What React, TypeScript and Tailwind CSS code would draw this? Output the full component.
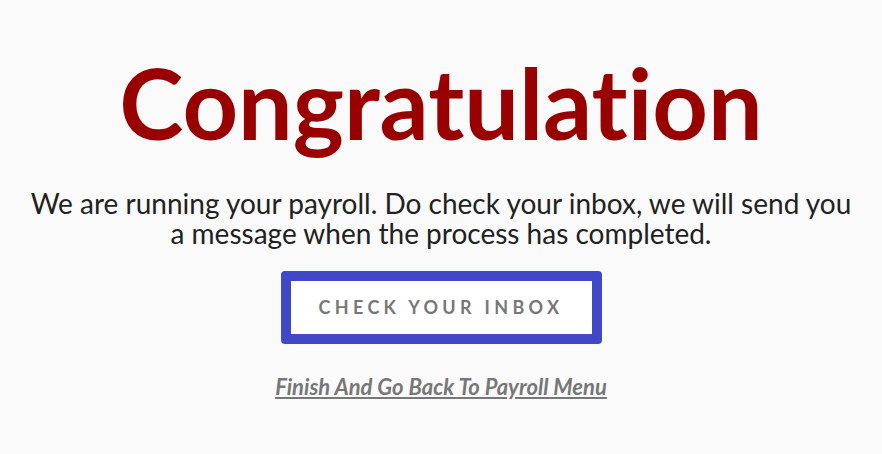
export default function App() {
  return (
    <div className="w-[882px] h-[454px] bg-[#fafafa] flex flex-col items-center font-['Lato',sans-serif]">
      <h1 className="mt-[48px] text-[97px] leading-[110px] font-bold text-[#990000] [font-variant-ligatures:none]">Congratulation</h1>
      <p className="mt-[30px] w-[840px] text-center text-[28px] leading-[30px] text-[#222222]">
        We are running your payroll. Do check your inbox, we will send you a message when the process has completed.
      </p>
      <button className="mt-[23px] w-[321px] h-[73px] border-[10px] border-[#4048c8] rounded-[4px] bg-white text-[18px] font-bold tracking-[0.24em] text-[#777777]">
        CHECK YOUR INBOX
      </button>
      <a href="#" className="mt-[26px] text-[22px] font-bold italic underline text-[#777777]">
        Finish And Go Back To Payroll Menu
      </a>
    </div>
  );
}
